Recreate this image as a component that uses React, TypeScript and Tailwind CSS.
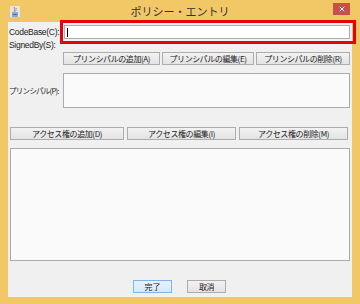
import { X } from 'lucide-react';

const FONT = { fontFamily: '"Noto Sans CJK JP", "Liberation Sans", sans-serif' };

function Btn({ label, className = '' }: { label: string; className?: string }) {
  return (
    <button className={`h-[13px] flex items-center justify-center overflow-hidden whitespace-nowrap border border-[#acacac] bg-gradient-to-b from-[#f2f2f2] to-[#e3e3e3] text-[8px] tracking-[-0.4px] leading-none text-[#222] ${className}`}>
      {label}
    </button>
  );
}

function JavaIcon() {
  return (
    <svg width="10" height="11" viewBox="0 0 10 11">
      <rect x="0" y="0" width="10" height="11" fill="#dfe6ef" />
      <path d="M4 1 C6 3 3 4 5 6" stroke="#e06a2a" strokeWidth="1" fill="none" />
      <path d="M6 2 C7 3 5 4 6 5" stroke="#e06a2a" strokeWidth="0.8" fill="none" />
      <path d="M2 7 h6 M2.5 8.5 h5 M2 10 h6" stroke="#3a6fb0" strokeWidth="1" />
    </svg>
  );
}

export default function App() {
  return (
    <div className="relative w-[360px] h-[304px] bg-[#f2c766] flex flex-col" style={FONT}>
      {/* Title bar */}
      <div className="h-[22px] flex items-center relative">
        <div className="ml-[10px] mt-[1px]">
          <JavaIcon />
        </div>
        <div className="flex-1 text-center text-[11px] text-[#333] pr-[20px]">ポリシー・エントリ</div>
        <div className="absolute left-[333px] top-[3px] w-[17px] h-[12px] bg-[#c7504f] flex items-center justify-center">
          <X className="w-[8px] h-[8px] text-white" strokeWidth={3} />
        </div>
      </div>

      {/* Client area */}
      <div className="mx-[8px] h-[275px] bg-[#f0f0f0] text-[#222] flex flex-col">
        <div className="flex items-center mt-[3px] h-[14px]">
          <span className="w-[56px] pl-[1px] text-[8.5px] tracking-[-0.3px] whitespace-nowrap" style={{ fontFamily: '"Liberation Sans", sans-serif' }}>CodeBase(C):</span>
          <div className="w-[286px] h-[14px] bg-white border border-[#abadb3] flex items-center pl-[2px]">
            <div className="w-px h-[9px] bg-black" />
          </div>
        </div>
        <div className="flex items-center h-[12px]">
          <span className="w-[56px] pl-[1px] text-[8.5px] tracking-[-0.3px] whitespace-nowrap" style={{ fontFamily: '"Liberation Sans", sans-serif' }}>SignedBy(S):</span>
        </div>
        <div className="flex gap-[2px] ml-[55px] mt-[1px] w-[287px]">
          <Btn label="プリンシパルの追加(A)" className="w-[97px]" />
          <Btn label="プリンシパルの編集(E)" className="w-[92px]" />
          <Btn label="プリンシパルの削除(R)" className="w-[94px]" />
        </div>
        <div className="flex items-center mt-[8px]">
          <span className="w-[55px] pl-[1px] text-[7.5px] tracking-[-0.7px] whitespace-nowrap overflow-hidden">プリンシパル(P):</span>
          <div className="w-[287px] h-[35px] bg-[#fafafa] border border-[#acacac]" />
        </div>
        <div className="flex gap-[3px] ml-[2px] mt-[19px] w-[338px]">
          <Btn label="アクセス権の追加(D)" className="w-[114px]" />
          <Btn label="アクセス権の編集(I)" className="w-[109px]" />
          <Btn label="アクセス権の削除(M)" className="w-[109px]" />
        </div>
        <div className="ml-[2px] mt-[8px] w-[340px] h-[113px] bg-[#fafafa] border border-[#acacac]" />
        <div className="flex ml-[125px] mt-[19px] gap-[15px]">
          <button className="w-[39px] h-[13px] flex items-center justify-center border border-[#7eb4ea] bg-gradient-to-b from-[#e8f2fc] to-[#d8e8f8] text-[8px] leading-none text-[#222]">完了</button>
          <Btn label="取消" className="w-[39px]" />
        </div>
      </div>

      {/* Highlight annotation */}
      <div className="absolute left-[60px] top-[20px] w-[296px] h-[24px] border-[3px] border-[#e8000b]" />
    </div>
  );
}
